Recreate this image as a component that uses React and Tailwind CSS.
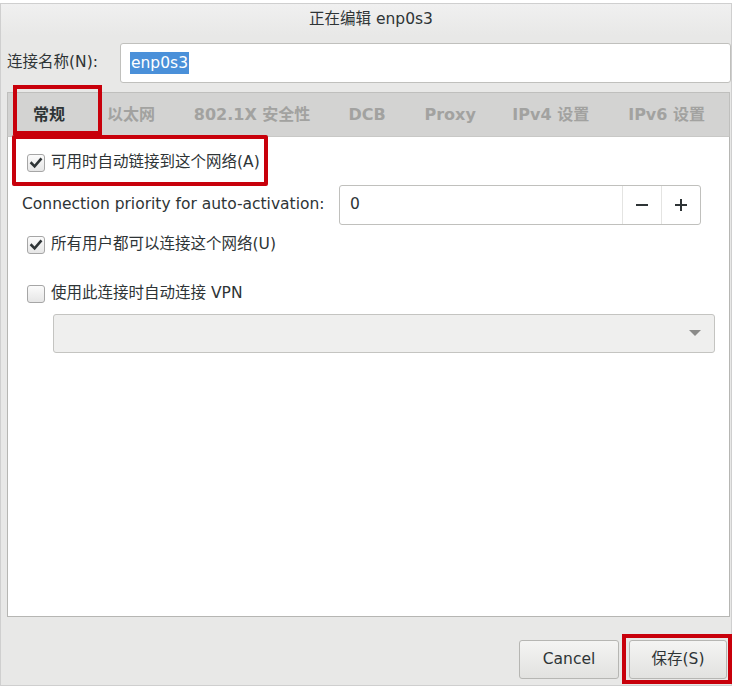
import React from "react";

const font = { fontFamily: '"DejaVu Sans", "Noto Sans CJK SC", sans-serif' };

function Check({ checked }) {
  return (
    <div className="w-[18px] h-[18px] rounded-[3px] border border-[#a6a6a6] bg-gradient-to-b from-[#fbfbfb] to-[#e6e6e6] flex items-center justify-center shrink-0">
      {checked && (
        <svg width="14" height="14" viewBox="0 0 14 14">
          <path d="M2.5 7.2 L5.6 10.3 L11.6 3.4" fill="none" stroke="#2e3436" strokeWidth="2.6" strokeLinecap="square" />
        </svg>
      )}
    </div>
  );
}

const tabs = [
  { t: "常规", w: "w-[74px]", active: true },
  { t: "以太网", w: "w-[87px]" },
  { t: "802.1X 安全性", w: "w-[155px]" },
  { t: "DCB", w: "w-[76px]" },
  { t: "Proxy", w: "w-[88px]" },
  { t: "IPv4 设置", w: "w-[116px]" },
  { t: "IPv6 设置", w: "w-[121px]" },
];

export default function App() {
  return (
    <div className="w-[734px] h-[688px] bg-white relative overflow-hidden text-[15.5px] text-[#2e3436]" style={font}>
      <div className="mt-[3px] w-[732px] h-[683px] border border-[#cfcfcf] bg-[#e8e8e7] flex flex-col">
        {/* title */}
        <div className="h-[32px] shrink-0 flex items-center justify-center bg-gradient-to-b from-[#f0f0f0] to-[#e8e8e7]">
          <span className="pl-[10px]">正在编辑 enp0s3</span>
        </div>
        {/* name row */}
        <div className="mt-[7px] h-[40px] flex items-center shrink-0">
          <div className="w-[119px] pl-[6px] whitespace-nowrap">连接名称(N):</div>
          <div className="flex-1 h-[40px] bg-white border border-[#c0c0bd] rounded-[3px] flex items-center pl-[9px]">
            <span className="bg-[#4a90d9] text-white h-[22px] leading-[22px] px-[1px]">enp0s3</span>
          </div>
        </div>
        {/* tabs */}
        <div className="mt-[9px] ml-[6px] mr-[1px] h-[44px] shrink-0 bg-[#d3d3d2] border border-[#bfbfbd] border-b-0 flex items-stretch pl-[5px]">
          {tabs.map((tab) => (
            <div
              key={tab.t}
              className={`${tab.w} pl-[20px] flex items-center font-bold text-[16px] whitespace-nowrap ${tab.active ? "text-[#2e3436]" : "text-[#a2a2a0]"}`}
            >
              {tab.t}
            </div>
          ))}
        </div>
        {/* content */}
        <div className="ml-[6px] mr-[1px] h-[481px] shrink-0 bg-white border border-[#b6b6b3] border-t-[#c8c8c6] flex flex-col">
          <div className="mt-[17px] ml-[19px] h-[18px] flex items-center gap-[6px]">
            <Check checked />
            <span>可用时自动链接到这个网络(A)</span>
          </div>
          <div className="mt-[13px] h-[40px] flex items-center">
            <span className="ml-[14px] w-[317px] whitespace-nowrap">Connection priority for auto-activation:</span>
            <div className="w-[362px] h-[40px] border border-[#c0c0bd] rounded-[3px] flex bg-white">
              <div className="flex-1 flex items-center pl-[10px]">0</div>
              <div className="w-[39px] border-l border-[#e4e4e2] flex items-center justify-center">
                <svg width="14" height="14" viewBox="0 0 14 14"><path d="M1 7 H13" stroke="#2e3436" strokeWidth="2" /></svg>
              </div>
              <div className="w-[39px] border-l border-[#e4e4e2] flex items-center justify-center">
                <svg width="14" height="14" viewBox="0 0 14 14"><path d="M1 7 H13 M7 1 V13" stroke="#2e3436" strokeWidth="2" /></svg>
              </div>
            </div>
          </div>
          <div className="mt-[11px] ml-[19px] h-[18px] flex items-center gap-[6px]">
            <Check checked />
            <span>所有用户都可以连接这个网络(U)</span>
          </div>
          <div className="mt-[31px] ml-[19px] h-[18px] flex items-center gap-[6px]">
            <Check />
            <span>使用此连接时自动连接 VPN</span>
          </div>
          <div className="mt-[11px] ml-[45px] mr-[14px] h-[39px] bg-[#efefee] border border-[#c4c4c1] rounded-[3px] flex items-center justify-end pr-[13px]">
            <svg width="12" height="7" viewBox="0 0 12 7"><path d="M0 0 H12 L6 6 Z" fill="#8b8b89" /></svg>
          </div>
        </div>
        {/* footer */}
        <div className="flex-1 flex items-end justify-end pr-[4px] gap-[10px] pb-[6px]">
          <button className="w-[100px] h-[39px] rounded-[3px] border border-[#b6b6b3] bg-gradient-to-b from-[#f4f4f3] to-[#e2e2e0] text-[#2e3436]">Cancel</button>
          <button className="w-[98px] h-[39px] rounded-[3px] border border-[#b6b6b3] bg-gradient-to-b from-[#f4f4f3] to-[#e2e2e0] text-[#2e3436]">保存(S)</button>
        </div>
      </div>
      {/* annotation boxes */}
      <div className="absolute left-[13px] top-[85px] w-[89px] h-[50px] border-[4px] border-[#c8000b] pointer-events-none" />
      <div className="absolute left-[12px] top-[135px] w-[256px] h-[51px] border-[4px] border-[#c8000b] rounded-[2px] pointer-events-none" />
      <div className="absolute left-[622px] top-[634px] w-[110px] h-[50px] border-[4px] border-[#c8000b] pointer-events-none" />
    </div>
  );
}
